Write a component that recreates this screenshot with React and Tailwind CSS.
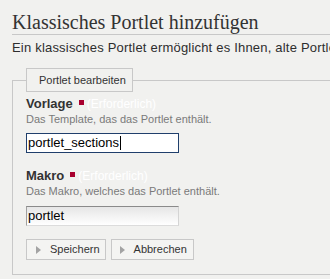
export default function App() {
  const Tri = () => (
    <svg width="5" height="8" viewBox="0 0 5 8" className="shrink-0">
      <polygon points="0,0 5,4 0,8" fill="#a3a3a3" />
    </svg>
  );
  return (
    <div
      className="w-[330px] h-[279px] overflow-hidden bg-[#f1f1ef] text-[#333]"
      style={{ fontFamily: '"Liberation Sans", Arial, sans-serif' }}
    >
      <h1
        className="ml-3 mt-[10px] h-[25px] border-b border-[#c8c8c8] text-[20px] leading-[24px] font-normal text-[#333] whitespace-nowrap"
        style={{ fontFamily: '"Liberation Serif", "Times New Roman", serif' }}
      >
        Klassisches Portlet hinzufügen
      </h1>
      <p className="ml-3 mt-[5px] text-[13px] leading-[16px] tracking-[0.2px] whitespace-nowrap text-[#2e2e2e]">
        Ein klassisches Portlet ermöglicht es Ihnen, alte Portlets weiterhin zu verwenden.
      </p>
      <fieldset className="ml-3 mt-[12px] w-[360px] border border-[#c8c8c8] pl-[13px] pt-[4px] pb-[14px]">
        <legend className="w-[107px] h-[24px] border border-[#c8c8c8] bg-[#f1f1ef] pl-3 text-[11px] leading-[22px] text-[#333]">
          Portlet bearbeiten
        </legend>

        <div className="text-[13px] leading-[16px]">
          <span className="font-bold text-[#333]">Vorlage</span>
          <span className="inline-block w-[5px] h-[5px] ml-[6px] mr-[3px] mb-[3px] bg-[#a8002f]"></span>
          <span className="text-[12px] text-white">(Erforderlich)</span>
        </div>
        <div className="text-[11px] leading-[14px] text-[#7a7a7a]">
          Das Template, das das Portlet enthält.
        </div>
        <div className="mt-[7px] w-[153px] h-[20px] border border-[#203f6c] bg-white flex items-center pl-[1px] text-[13px] text-black">
          <span>portlet_sections</span>
          <span className="inline-block w-px h-[14px] bg-black ml-px"></span>
        </div>

        <div className="mt-[15px] text-[13px] leading-[16px]">
          <span className="font-bold text-[#333]">Makro</span>
          <span className="inline-block w-[5px] h-[5px] ml-[6px] mr-[3px] mb-[3px] bg-[#a8002f]"></span>
          <span className="text-[12px] text-white">(Erforderlich)</span>
        </div>
        <div className="text-[11px] leading-[14px] text-[#7a7a7a]">
          Das Makro, welches das Portlet enthält.
        </div>
        <div className="mt-[8px] w-[153px] h-[20px] border border-t-[#8a8a8a] border-l-[#a0a0a0] border-r-[#d4d4d4] border-b-[#dcdcdc] bg-linear-to-b from-[#e6e6e6] to-white flex items-center pl-[1px] text-[13px] text-black">
          portlet
        </div>

        <div className="mt-[13px] flex gap-[5px]">
          <button className="h-[21px] flex items-center gap-[9px] pl-[9px] pr-[5px] border border-[#c8c8c8] bg-[#f4f4f2] text-[11px] text-[#333]">
            <Tri />
            <span>Speichern</span>
          </button>
          <button className="h-[21px] flex items-center gap-[9px] pl-[8px] pr-[6px] border border-[#c8c8c8] bg-[#f4f4f2] text-[11px] text-[#333]">
            <Tri />
            <span>Abbrechen</span>
          </button>
        </div>
      </fieldset>
    </div>
  );
}
